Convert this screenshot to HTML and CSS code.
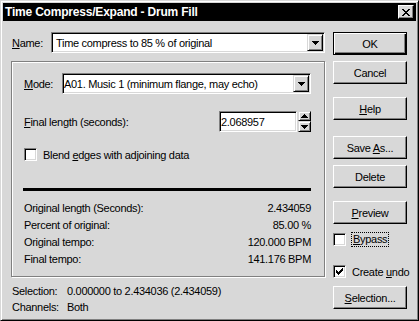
FILE: index.html
```html
<!DOCTYPE html>
<html lang="en">
<head>
    <meta charset="UTF-8">
    <title>Time Compress/Expand - Drum Fill</title>
    <link rel="stylesheet" href="styles.css">
</head>
<body>

    <div class="window">
        <!-- Title bar -->
        <div class="titlebar">
            <span class="title">Time Compress/Expand - Drum Fill</span>
            <div class="close">
                <svg width="8" height="7" viewBox="0 0 8 7" shape-rendering="crispEdges">
                    <path d="M0 0h2v1H0zM6 0h2v1H6zM1 1h2v1H1zM5 1h2v1H5zM2 2h4v1H2zM3 3h2v1H3zM2 4h4v1H2zM1 5h2v1H1zM5 5h2v1H5zM0 6h2v1H0zM6 6h2v1H6z" fill="#000"/>
                </svg>
            </div>
        </div>

        <div class="content">
            <div class="main">
                <div class="name-row">
                    <label class="name-label"><u>N</u>ame:</label>
                    <div class="combo name-combo">
                        <span class="combo-text">Time compress to 85 % of original</span>
                        <div class="drop">
                            <svg width="7" height="4" viewBox="0 0 7 4" shape-rendering="crispEdges"><path d="M0 0h7v1H0zM1 1h5v1H1zM2 2h3v1H2zM3 3h1v1H3z" fill="#000"/></svg>
                        </div>
                    </div>
                </div>

                <div class="group">
                    <div class="mode-row">
                        <label class="mode-label"><u>M</u>ode:</label>
                        <div class="combo mode-combo">
                            <span class="combo-text tight">A01. Music 1 (minimum flange, may echo)</span>
                            <div class="drop">
                                <svg width="7" height="4" viewBox="0 0 7 4" shape-rendering="crispEdges"><path d="M0 0h7v1H0zM1 1h5v1H1zM2 2h3v1H2zM3 3h1v1H3z" fill="#000"/></svg>
                            </div>
                        </div>
                    </div>

                    <div class="final-row">
                        <label class="final-label"><u>F</u>inal length (seconds):</label>
                        <div class="field spin-input">2.068957</div>
                        <div class="spinner">
                            <div class="spin-btn">
                                <svg width="7" height="4" viewBox="0 0 7 4" shape-rendering="crispEdges"><path d="M3 0h1v1H3zM2 1h3v1H2zM1 2h5v1H1zM0 3h7v1H0z" fill="#000"/></svg>
                            </div>
                            <div class="spin-btn">
                                <svg width="7" height="4" viewBox="0 0 7 4" shape-rendering="crispEdges"><path d="M0 0h7v1H0zM1 1h5v1H1zM2 2h3v1H2zM3 3h1v1H3z" fill="#000"/></svg>
                            </div>
                        </div>
                    </div>

                    <div class="check-row">
                        <div class="checkbox"></div>
                        <span class="check-text">Blend <u>e</u>dges with adjoining data</span>
                    </div>

                    <div class="rule"></div>

                    <div class="info">
                        <div class="info-row"><span>Original length (Seconds):</span><span>2.434059</span></div>
                        <div class="info-row"><span>Percent of original:</span><span>85.00 %</span></div>
                        <div class="info-row"><span>Original tempo:</span><span>120.000 BPM</span></div>
                        <div class="info-row"><span>Final tempo:</span><span>141.176 BPM</span></div>
                    </div>
                </div>

                <div class="selinfo">
                    <div class="sel-row"><span class="sel-label">Selection:</span><span>0.000000 to 2.434036 (2.434059)</span></div>
                    <div class="sel-row"><span class="sel-label">Channels:</span><span>Both</span></div>
                </div>
            </div>

            <!-- Buttons on the right -->
            <div class="side">
                <div class="btn default"><span>OK</span></div>
                <div class="btn gap-6"><span>Cancel</span></div>
                <div class="btn gap-13"><span><u>H</u>elp</span></div>
                <div class="btn gap-16"><span>Save <u>A</u>s...</span></div>
                <div class="btn gap-6"><span>Delete</span></div>
                <div class="btn gap-13"><span><u>P</u>review</span></div>
                <div class="side-check bypass">
                    <div class="checkbox"></div>
                    <span class="focus-text"><u>B</u>ypass</span>
                </div>
                <div class="side-check undo">
                    <div class="checkbox">
                        <svg width="7" height="7" viewBox="0 0 7 7" shape-rendering="crispEdges"><path d="M6 0h1v3H6zM5 1h1v3H5zM4 2h1v3H4zM0 2h1v3H0zM1 3h1v3H1zM2 4h1v3H2zM3 3h1v3H3z" fill="#000"/></svg>
                    </div>
                    <span class="check-text">Create <u>u</u>ndo</span>
                </div>
                <div class="btn gap-8"><span><u>S</u>election...</span></div>
            </div>
        </div>
    </div>

</body>
</html>
```

FILE: styles.css
```css
* {
    box-sizing: border-box;
}
body {
    margin: 0;
    background-color: #d8d8d8;
    font-family: "Liberation Sans", Arial, sans-serif;
    font-size: 11px;
    letter-spacing: -0.3px;
    color: #000;
}
.window {
    width: 419px;
    height: 321px;
    padding: 2px;
    background-color: #d8d8d8;
    border: 1px solid;
    border-color: #d8d8d8 #000 #000 #d8d8d8;
    box-shadow: inset 1px 1px #fff, inset -1px -1px #808080;
}
.titlebar {
    height: 18px;
    background-color: #000;
    color: #fff;
    display: flex;
    align-items: center;
    justify-content: space-between;
    padding: 0 2px;
}
.title {
    font-weight: bold;
    font-size: 12px;
    letter-spacing: -0.2px;
}
.close {
    width: 16px;
    height: 14px;
    background-color: #d8d8d8;
    border: 1px solid;
    border-color: #fff #000 #000 #fff;
    box-shadow: inset -1px -1px #808080;
    display: flex;
    align-items: center;
    justify-content: center;
}
.content {
    display: flex;
    padding: 11px 0 0 8px;
}
.main {
    width: 314px;
}
.side {
    width: 74px;
    margin-left: 8px;
    display: flex;
    flex-direction: column;
}

/* sunken fields */
.combo, .field {
    height: 21px;
    background-color: #fff;
    border: 1px solid;
    border-color: #808080 #fff #fff #808080;
    box-shadow: inset 1px 1px #000, inset -1px -1px #d8d8d8;
    padding: 1px;
    display: flex;
    align-items: center;
}
.combo-text {
    flex: 1;
    padding-left: 3px;
    white-space: nowrap;
    overflow: hidden;
}
.combo-text.tight {
    padding-left: 0;
}
.drop, .spin-btn {
    width: 16px;
    height: 17px;
    background-color: #d8d8d8;
    border: 1px solid;
    border-color: #d8d8d8 #000 #000 #d8d8d8;
    box-shadow: inset 1px 1px #fff, inset -1px -1px #808080;
    display: flex;
    align-items: center;
    justify-content: center;
}
.drop svg, .spin-btn svg, .close svg, .checkbox svg {
    display: block;
}

.name-row {
    display: flex;
    align-items: center;
    height: 21px;
}
.name-label {
    width: 40px;
    padding-left: 1px;
}
.name-combo {
    width: 274px;
}

.group {
    margin-top: 8px;
    height: 216px;
    border: 1px solid #808080;
    box-shadow: inset 1px 1px #fff, 1px 1px #fff;
    padding: 0 13px 0 12px;
}
.mode-row {
    margin-top: 11px;
    height: 21px;
    display: flex;
    align-items: center;
}
.mode-label {
    width: 38px;
}
.mode-combo {
    flex: 1;
}
.final-row {
    margin-top: 17px;
    height: 21px;
    display: flex;
    align-items: center;
}
.final-label {
    flex: 1;
}
.spin-input {
    width: 78px;
    padding-left: 1px;
}
.spinner {
    width: 13px;
    height: 21px;
    margin-left: 1px;
    display: flex;
    flex-direction: column;
}
.spin-btn {
    width: 13px;
    height: 10px;
}
.spin-btn + .spin-btn {
    height: 11px;
}
.check-row {
    margin-top: 16px;
    height: 13px;
    display: flex;
    align-items: center;
}
.checkbox {
    width: 13px;
    height: 13px;
    flex: none;
    background-color: #fff;
    border: 1px solid;
    border-color: #808080 #fff #fff #808080;
    box-shadow: inset 1px 1px #000, inset -1px -1px #d8d8d8;
    display: flex;
    align-items: center;
    justify-content: center;
}
.check-text {
    margin-left: 6px;
    white-space: nowrap;
}
.rule {
    margin-top: 27px;
    margin-left: -1px;
    height: 3px;
    background-color: #000;
}
.info {
    margin-top: 9px;
}
.info-row {
    display: flex;
    justify-content: space-between;
    line-height: 17px;
}
.selinfo {
    margin-top: 6px;
}
.sel-row {
    display: flex;
    line-height: 16px;
}
.sel-label {
    width: 56px;
    padding-left: 1px;
}

/* buttons */
.btn {
    height: 23px;
    border: 1px solid;
    border-color: #fff #000 #000 #fff;
    box-shadow: inset -1px -1px #808080;
    display: flex;
    align-items: center;
    justify-content: center;
    white-space: nowrap;
}
.btn.default {
    border-color: #000;
    box-shadow: inset 1px 1px #fff, inset -1px -1px #000, inset -2px -2px #808080;
}
.gap-6 { margin-top: 6px; }
.gap-8 { margin-top: 8px; }
.gap-13 { margin-top: 13px; }
.gap-16 { margin-top: 16px; }
.side-check {
    display: flex;
    align-items: center;
    height: 13px;
}
.bypass {
    margin-top: 9px;
}
.undo {
    margin-top: 19px;
}
.focus-text {
    margin-left: 5px;
    padding: 0 1px;
    line-height: 13px;
    border: 1px dotted #000;
}
```
